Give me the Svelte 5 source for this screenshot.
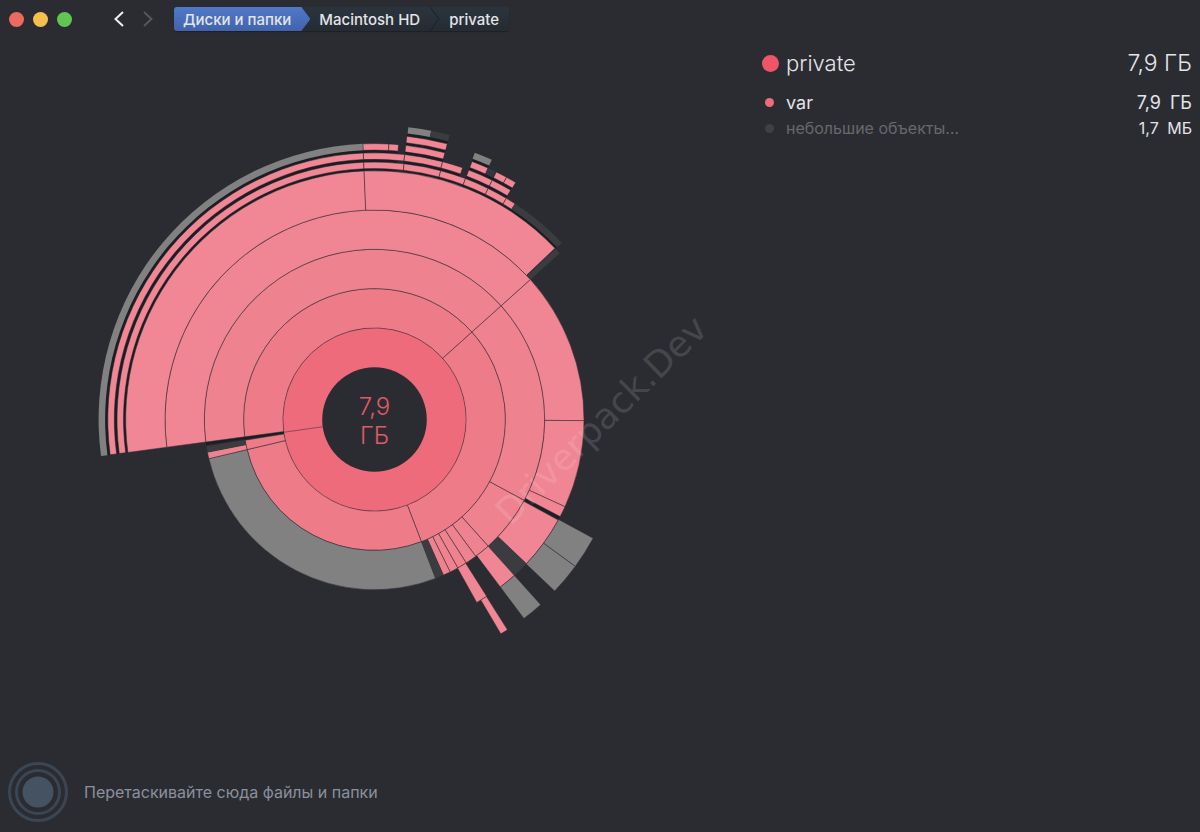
<script>
    const center = 'translate(319.5 319.5)';
    const hole = 52.3;
    const step = 39.3;

    const rings = ['#ee6b7b', '#ee7b88', '#ef828f', '#f08593', '#f18795'];
    const grey = '#818181';
    const dim = '#3a3c3f';
    const gap = '#1a1f24';

    // [level, from, to, colour], angles in degrees clockwise from the top
    const blocks = [
        [2, 261.2, 262.4, gap],
        [3, 261.4, 262.4, gap],
        [4, 117.6, 118.5, gap],
        [2, -97.6, 48.1],
        [2, 48.1, 159],
        [2, 159, 256.7],
        [2, 256.7, 260.9],
        [3, -97.6, 48.1],
        [3, 48.1, 118.4],
        [3, 118.4, 138.1],
        [3, 138.1, 143.5],
        [3, 143.5, 147.4],
        [3, 147.4, 150.7],
        [3, 150.7, 153.6],
        [3, 153.6, 156.1],
        [3, 156.1, 159, dim],
        [3, 159, 256.7, grey],
        [3, 256.7, 258.9],
        [3, 258.9, 261, dim],
        [4, -97.6, 48.1],
        [4, 48.1, 90.3],
        [4, 90.3, 114.6],
        [4, 114.6, 117.6],
        [4, 118.7, 133.5],
        [4, 133.5, 138.1, dim],
        [4, 138.1, 143.1],
        [4, 147.6, 150.8],
        [5, -97.6, -2.4],
        [5, -2.4, 46.5],
        [5, 46.7, 48.1, dim],
        [5, 118.5, 126.2, grey],
        [5, 126.2, 133.6, grey],
        [5, 138.1, 143.1, grey],
        [5, 147.7, 149.5]
    ];

    // thin outer levels: [level, from, to, colour]
    const pink = '#f18795';
    const strips = [
        [0, -97.6, -2.4, pink],
        [0, -2.4, 6.6, pink],
        [0, 6.6, 14.9, pink],
        [0, 14.9, 20.7, pink],
        [0, 20.7, 26.2, pink],
        [0, 26.2, 30.8, pink],
        [0, 30.8, 33.1, pink],
        [0, 33.1, 46.7, dim],
        [1, -97.6, -2.4, pink],
        [1, -2.4, 6.5, pink],
        [1, 6.5, 14.8, pink],
        [1, 14.8, 19.3, pink],
        [1, 20.7, 26.2, pink],
        [1, 26.2, 30.7, pink],
        [2, -97.6, -2.4, grey],
        [2, -2.4, 3, pink],
        [2, 3, 5, pink],
        [2, 6.5, 14.8, pink],
        [2, 20.7, 24.3, pink],
        [2, 24.3, 26.1, '#323842'],
        [2, 26.2, 28.6, pink],
        [2, 28.6, 30.8, pink],
        [3, 6.5, 14.8, pink],
        [3, 20.6, 24.3, grey],
        [4, 6.6, 11.1, grey],
        [4, 11.1, 14.8, dim]
    ];

    // darker bed under the thin levels
    const beds = [
        [248, 270, -97.6, 5],
        [248, 288, 6.5, 14.8],
        [248, 261, 14.8, 19.3],
        [248, 251, 19.3, 46.5],
        [256, 279, 20.7, 24.3],
        [256, 270, 24.3, 30.7]
    ];

    function point(r, deg) {
        const a = (deg * Math.PI) / 180;
        return `${(r * Math.sin(a)).toFixed(2)} ${(-r * Math.cos(a)).toFixed(2)}`;
    }

    function sector(r1, r2, from, to) {
        const large = to - from > 180 ? 1 : 0;
        return `M${point(r1, from)}L${point(r2, from)}A${r2} ${r2} 0 ${large} 1 ${point(r2, to)}L${point(r1, to)}A${r1} ${r1} 0 ${large} 0 ${point(r1, from)}Z`;
    }

    const items = [
        { name: 'var', size: '7,9', unit: 'ГБ', small: false },
        { name: 'небольшие объекты…', size: '1,7', unit: 'МБ', small: true }
    ];
</script>

<div class="window">
    <header>
        <div class="lights">
            <button class="red" aria-label="Закрыть"></button>
            <button class="yellow" aria-label="Свернуть"></button>
            <button class="green" aria-label="Развернуть"></button>
        </div>
        <div class="history">
            <button aria-label="Назад">
                <svg width="12" height="16" viewBox="0 0 12 16"><path d="M10 1 2.500 8l7.500 7" /></svg>
            </button>
            <button class="off" aria-label="Вперёд">
                <svg width="12" height="16" viewBox="0 0 12 16"><path d="M2 1 9.500 8 2 15" /></svg>
            </button>
        </div>
        <nav>
            <button class="root">Диски и папки</button>
            <button>Macintosh HD</button>
            <svg width="10" height="24" viewBox="0 0 10 24"><path d="M0 0 9 12 0 24" /></svg>
            <button>private</button>
        </nav>
    </header>

    <main>
        <div class="chart">
            <svg viewBox="0 0 639 639">
                <g transform={center}>
                    {#each beds as [r1, r2, from, to]}
                        <path d={sector(r1, r2, from, to)} fill={gap} />
                    {/each}
                    <circle r={hole + step} fill={rings[0]} />
                    {#each blocks as [level, from, to, color]}
                        <path
                            class:line={!color || color == grey}
                            d={sector(hole + step * (level - 1), hole + step * level, from, to)}
                            fill={color || rings[level - 1]}
                        />
                    {/each}
                    <path class="line" d="M{point(hole, 262)}L{point(hole + step, 262)}" />
                    {#each strips as [level, from, to, color]}
                        <path
                            class:edge={color == pink}
                            d={sector(251 + level * 9.200, 257.500 + level * 9.200, from, to)}
                            fill={color}
                        />
                    {/each}
                    <circle r={hole} fill="#2b2c31" />
                    <text class="total" y="-5">7,9</text>
                    <text class="total" y="24">ГБ</text>
                    <text class="mark" transform="translate(136 107) rotate(-44.5)">Driverpack.Dev</text>
                </g>
            </svg>
        </div>

        <aside>
            <div class="row current">
                <i></i>
                <h1>private</h1>
                <span>7,9 ГБ</span>
            </div>
            <ul>
                {#each items as item}
                    <li class="row" class:small={item.small}>
                        <i></i>
                        <b>{item.name}</b>
                        <span>{item.size} <em>{item.unit}</em></span>
                    </li>
                {/each}
            </ul>
        </aside>
    </main>

    <footer>
        <svg width="60" height="60" viewBox="0 0 60 60">
            <circle cx="30" cy="30" r="28.500" />
            <circle cx="30" cy="30" r="21.500" />
            <circle class="dot" cx="30" cy="30" r="15.500" />
        </svg>
        <p>Перетаскивайте сюда файлы и папки</p>
    </footer>
</div>

<style>
    :global(body) {
        background: #2b2c31;
    }

    .window {
        display: flex;
        flex-direction: column;
        min-height: 100vh;
        box-sizing: border-box;
        background: #2b2c31;
        color: #e3e4e8;
        font-family: Inter, "Liberation Sans", sans-serif;
    }

    button {
        border: 0;
        padding: 0;
        background: none;
        color: inherit;
        font: inherit;
    }

    header {
        display: flex;
        align-items: center;
        height: 38px;
        padding-left: 9px;
    }

    .lights {
        display: flex;
        gap: 9px;
    }

    .lights button {
        width: 15px;
        height: 15px;
        border-radius: 50%;
    }

    .red {
        background: #ed6a5e;
    }

    .yellow {
        background: #f5bf4f;
    }

    .green {
        background: #61c554;
    }

    .history {
        display: flex;
        gap: 17px;
        margin-left: 41px;
    }

    .history button {
        display: flex;
    }

    .history path {
        fill: none;
        stroke: #f0f0f2;
        stroke-width: 2;
    }

    .history .off path {
        stroke: #55575c;
    }

    nav {
        display: flex;
        height: 24px;
        margin-left: 20px;
        border-radius: 3px;
        background: linear-gradient(#2b343d, #252b33);
        box-shadow: 0 1px 1px #1e2025;
        font-size: 15px;
        font-weight: 500;
        overflow: hidden;
    }

    nav button {
        padding: 0 10px 0 9px;
        white-space: nowrap;
    }

    nav .root {
        padding-right: 19px;
        background: linear-gradient(#5079ca, #4163ab);
        clip-path: polygon(0 0, calc(100% - 9px) 0, 100% 50%, calc(100% - 9px) 100%, 0 100%);
    }

    nav path {
        fill: none;
        stroke: #1b2027;
    }

    main {
        display: grid;
        grid-template-columns: minmax(0, 1fr) 451px;
        flex: 1;
    }

    .chart {
        padding-top: 62px;
    }

    .chart svg {
        display: block;
        width: 100%;
        height: 639px;
        overflow: visible;
    }

    .line {
        stroke: #2b2c31;
        stroke-opacity: 0.5;
        stroke-width: 1;
    }

    .edge {
        stroke: #1a1f24;
        stroke-width: 0.5;
    }

    .total {
        fill: #e0596a;
        font-size: 24px;
        font-weight: 300;
        text-anchor: middle;
    }

    .mark {
        fill: #fff;
        fill-opacity: 0.14;
        font-family: "DejaVu Sans", sans-serif;
        font-size: 36px;
    }

    aside {
        padding: 8px 8px 0 13px;
    }

    ul {
        margin: 9px 0 0;
        padding: 0;
        list-style: none;
    }

    .row {
        display: flex;
        align-items: center;
        height: 26px;
        font-size: 18px;
    }

    .current {
        height: 34px;
        font-size: 23px;
    }

    .row i {
        width: 9px;
        height: 9px;
        margin: 0 12px 0 3px;
        border-radius: 50%;
        background: #ee6b7b;
    }

    .current i {
        width: 17px;
        height: 17px;
        margin: 0 7px 0 0;
        background: #ee5566;
    }

    .row b,
    .row h1 {
        flex: 1;
        margin: 0;
        font-size: inherit;
        font-weight: 400;
    }

    .row h1,
    .current span {
        font-weight: 300;
    }

    .row h1 {
        font-size: 22px;
    }

    .row em {
        margin-left: 4px;
        font-style: normal;
    }

    .small {
        font-size: 16px;
    }

    .small i {
        background: #3e4045;
    }

    .small b {
        color: #66686c;
    }

    footer {
        display: flex;
        align-items: center;
        padding: 0 8px 10px;
        color: #8a909c;
        font-size: 16px;
    }

    footer p {
        margin: 0 0 0 16px;
    }

    footer circle {
        fill: none;
        stroke: #3a4654;
        stroke-width: 3;
    }

    footer .dot {
        fill: #445262;
        stroke: none;
    }
</style>
